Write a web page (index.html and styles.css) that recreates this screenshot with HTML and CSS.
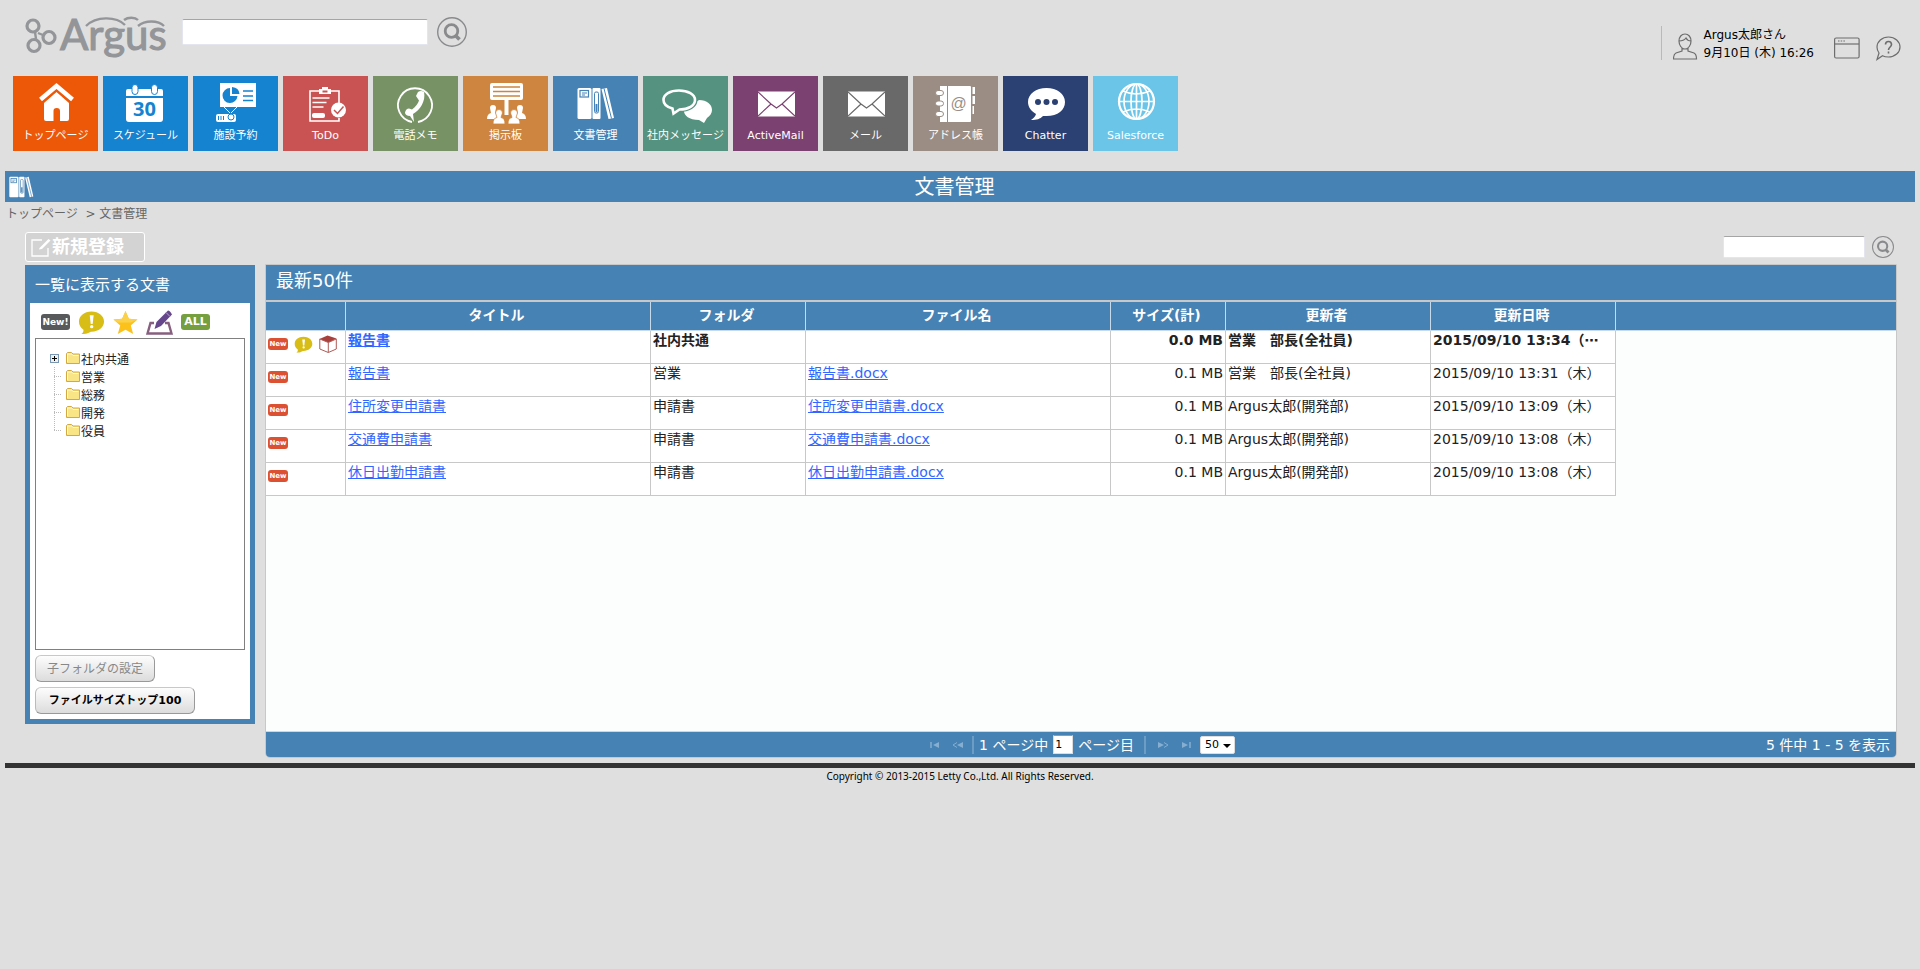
FILE: index.html
```html
<!DOCTYPE html>
<html lang="ja">
<head>
  <meta charset="utf-8">
  <title>文書管理</title>
  <link rel="stylesheet" href="styles.css">
</head>
<body>
  <!-- shared icons -->
  <svg class="defs" width="0" height="0">
    <symbol id="docs" viewBox="0 0 38 33">
      <rect x="0.5" y="1" width="14" height="31" rx="1.5" fill="#fff"/>
      <rect x="3" y="3.5" width="8.5" height="6.5" fill="none" stroke="#4682b4" stroke-width="1.2"/>
      <path d="M5 6h5M5 8h3" stroke="#4682b4"/>
      <rect x="15.5" y="1" width="8" height="31" rx="1" fill="#fff"/>
      <rect x="17.5" y="5" width="4" height="21" rx="1.5" fill="none" stroke="#4682b4"/>
      <path d="M19.500 17v8" stroke="#4682b4" stroke-width="2"/>
      <path d="M24.500 2l5.500-1 7 30-5.500 1z" fill="#fff"/>
      <path d="M27 1.500l7.500 30" stroke="#4682b4"/>
    </symbol>
    <symbol id="mail" viewBox="0 0 37 26">
      <rect x="0" y="0.500" width="37" height="25" fill="#fff"/>
      <path d="M0 1l13 12 5.500 4 5.500-4L37 1M0 25l13-12M37 25L24 13" fill="none" stroke="currentColor" stroke-width="1.200"/>
    </symbol>
    <symbol id="search" viewBox="0 0 30 30">
      <circle cx="15" cy="15" r="14.300" fill="none" stroke="#898a8c" stroke-width="1.400"/>
      <circle cx="14.500" cy="14" r="6.300" fill="none" stroke="#898a8c" stroke-width="2.800"/>
      <path d="M18.500 18.500l4 4" stroke="#898a8c" stroke-width="3.800"/>
    </symbol>
    <symbol id="notice" viewBox="0 0 28 25">
      <path d="M14 1c7.500 0 13 4.500 13 10.500S21.500 22 14 22c-2 0-3.300 2.500-10.500 2.500 2-1.500 2.500-3.500 2-4.700C2.500 18 1 15 1 11.500 1 5.500 6.500 1 14 1z" fill="#d8bd17"/>
      <path d="M12.200 5h4l-1 9h-2z" fill="#fff"/>
      <circle cx="14.200" cy="16.800" r="1.700" fill="#fff"/>
    </symbol>
    <symbol id="folder" viewBox="0 0 14 12">
      <path d="M0.500 11.500v-10l1-1h4l1.500 1.500h6.500v9.500z" fill="#f9e486" stroke="#d4a93f"/>
      <path d="M1.500 10V2h4l1.500 1.500h5.500" fill="none" stroke="#fffbd0"/>
    </symbol>
  </svg>

  <header class="header">
    <div class="header-left">
      <svg class="logo" viewBox="0 0 142 46" role="img" aria-label="Argus">
        <g fill="none" stroke="#939598" stroke-width="3.200">
          <circle cx="8" cy="10" r="6"/>
          <circle cx="24" cy="21.500" r="6"/>
          <circle cx="9" cy="29.500" r="6"/>
          <path d="M10 16l1 7M13 17l5 2" stroke-width="2.400"/>
          <path d="M61 10c10-10 30-10 39-1M99 4c4-3 11-3 14 0M113 10c7-6 20-6 26 0" stroke-width="2.400"/>
        </g>
        <text x="35" y="34" font-family="Lato" font-size="42" fill="#939598" stroke="#939598" stroke-width="1.100">Argus</text>
      </svg>
      <input class="text-box site-search" type="text" aria-label="検索">
      <button class="icon-btn" aria-label="検索"><svg width="30" height="30"><use href="#search"/></svg></button>
    </div>
    <div class="user">
      <svg class="user-icon" viewBox="0 0 25 27" fill="none" stroke="#6d6d6d" stroke-width="1.200">
        <path d="M6 8c0-4 2.500-7 6-7s6 3 6 7-2.500 8-6 8-6-4-6-8zM6 8c3 0 5.500-1 7-3 1 2 2.500 3 5 3M9 15v3l-6 2c-2 1-2.500 3-2.500 6h23c0-3-.5-5-2.500-6l-6-2v-3"/>
      </svg>
      <p>Argus太郎さん<br>9月10日 (木) 16:26</p>
      <svg class="window-icon" viewBox="0 0 26 22" fill="none" stroke="#6d6d6d" stroke-width="1.200">
        <rect x="0.600" y="1" width="24.500" height="20" rx="1.500"/>
        <path d="M1 7h24"/><path d="M4 4h7" stroke-dasharray="1.500 1.200"/>
      </svg>
      <svg class="help-icon" viewBox="0 0 26 25" fill="none" stroke="#6d6d6d" stroke-width="1.200">
        <path d="M13.500 1c6.500 0 11.500 4.500 11.500 10s-5 10-11.500 10c-2.200 0-4.500-.5-6-1.300L2 23.500l2-6.500c-1.300-1.700-2-3.700-2-6C2 5.500 7 1 13.500 1z"/>
        <path d="M10.500 8.500c0-4 6-4 6 0 0 2.500-3 2.500-3 5.500M13.500 15.500v2" stroke-width="1.600"/>
      </svg>
    </div>
  </header>

  <nav class="menu">
    <a href="#" class="tile home">
      <svg viewBox="0 0 85 50"><path d="M31 27L43.500 16 56 27v16q0 2-2 2h-7V35q0-3-3.300-3T40.500 35v10H33q-2 0-2-2z" fill="#fff"/><path d="M27.500 23.500L43.500 10l16 13.500" fill="none" stroke="#fff" stroke-width="4.500"/><path d="M30 26.500L43.500 15 57 26.500" fill="none" stroke="#ec5807" stroke-width="0.800"/></svg>
      <span>トップページ</span>
    </a>
    <a href="#" class="tile schedule">
      <svg viewBox="0 0 85 50"><path d="M23 20v-5q0-2 2-2h33q2 0 2 2v5zM23 22h37v21q0 3-3 3H26q-3 0-3-3z" fill="#fff"/><rect x="29" y="8.500" width="6" height="10" rx="3" fill="#fff" stroke="#1583d0"/><rect x="48.500" y="8.500" width="6" height="10" rx="3" fill="#fff" stroke="#1583d0"/><text x="41.500" y="40" text-anchor="middle" font-family="Open Sans" font-weight="bold" font-size="20" fill="#1583d0">30</text></svg>
      <span>スケジュール</span>
    </a>
    <a href="#" class="tile facility">
      <svg viewBox="0 0 85 50"><rect x="27" y="7" width="36" height="24" fill="#fff"/><path d="M37 12a7.500 7.500 0 1 0 7.500 8H37z" fill="#1583d0"/><path d="M39 11v7h7.500q-.5-6.500-7.500-7z" fill="#1583d0"/><path d="M50 15h10M50 20h10M50 24.500h10" stroke="#1583d0" stroke-width="1.600"/><path d="M31 31l6 6M44 31l-6 6" stroke="#fff"/><rect x="23" y="38" width="20" height="8" rx="2" fill="#fff"/><path d="M25.500 40v4M28 40v4M30.500 40v4" stroke="#1583d0"/><circle cx="38" cy="41" r="3" fill="#fff" stroke="#1583d0"/></svg>
      <span>施設予約</span>
    </a>
    <a href="#" class="tile todo">
      <svg viewBox="0 0 85 50"><path d="M36 15h-9v30h29v-3M56 27V15h-8" fill="none" stroke="#fff" stroke-width="1.600"/><path d="M36 18v-5h3v-2h6v2h3v5z" fill="#fff"/><path d="M39.500 15.500h5" stroke="#c95353" stroke-width="2"/><path d="M29.500 22h17M29.500 26.500h14M29.500 31h11" stroke="#fff" stroke-width="1.600"/><rect x="29" y="37" width="13" height="5" rx="2" fill="#fff"/><circle cx="55.500" cy="34" r="7.500" fill="#fff"/><path d="M51 34l3.500 3.500 6-7" fill="none" stroke="#c95353" stroke-width="1.500"/></svg>
      <span>ToDo</span>
    </a>
    <a href="#" class="tile phone">
      <svg viewBox="0 0 85 50"><path d="M39 46a17 17 0 1 1 6 0" fill="none" stroke="#fff" stroke-width="1.800"/><path d="M43 20l2-4q3-2 6 0c2 9-4 18-11 22l1 8-4-6c-3 0-5-1.500-5-3.500q1-4 4-4l3 1c4-3 6-6 7-9z" fill="#fff"/></svg>
      <span>電話メモ</span>
    </a>
    <a href="#" class="tile board">
      <svg viewBox="0 0 85 50"><rect x="27" y="7" width="33" height="17" rx="2" fill="#fff"/><path d="M30 11h27M30 15.500h27M30 20h27" stroke="#cd853f" stroke-width="1.300"/><path d="M43.500 24v15" stroke="#fff" stroke-width="4"/><g fill="#fff"><path d="M24 43q0-5 4-6l-1-5q0-3 3-3t3 3l-1 5q4 1 4 6zM63 43q0-5-4-6l1-5q0-3-3-3t-3 3l1 5q-4 1-4 6z"/><path d="M30 48q0-6 4-6.500l-1.500-4.500q0-3.500 3.500-3.500t3.500 3.500L38 41.500q4 .5 4 6.500zM57 48q0-6-4-6.500l1.500-4.500q0-3.500-3.500-3.500T47.500 37l1.500 4.500q-4 .5-4 6.500z" stroke="#cd853f" stroke-width="0.800"/></g></svg>
      <span>掲示板</span>
    </a>
    <a href="#" class="tile docs">
      <svg viewBox="0 0 85 50"><use href="#docs" x="24" y="11" width="38" height="33"/></svg>
      <span>文書管理</span>
    </a>
    <a href="#" class="tile message">
      <svg viewBox="0 0 85 50"><path d="M56 24c8 0 13 4.500 13 10 0 3-2 6-5 8l-3 5-5-3c-10 0-15-4.500-15-9z" fill="#fff"/><path d="M36 14.500c-9 0-15.500 4-15.500 9.500 0 4 3 7 8 8.500l2 6 6-5c9 0 15.500-4 15.500-9.500s-7-9.500-16-9.500z" fill="#55927f" stroke="#55927f" stroke-width="5"/><path d="M36 14.500c-9 0-15.500 4-15.500 9.500 0 4 3 7 9 8.500l1 5 6-4c9 0 15.500-4 15.500-9.500s-7-9.500-16-9.500z" fill="#55927f" stroke="#fff" stroke-width="2.600"/></svg>
      <span>社内メッセージ</span>
    </a>
    <a href="#" class="tile active-mail">
      <svg viewBox="0 0 85 50"><use href="#mail" x="25" y="15" width="37" height="26"/></svg>
      <span>ActiveMail</span>
    </a>
    <a href="#" class="tile mail">
      <svg viewBox="0 0 85 50"><use href="#mail" x="25" y="15" width="37" height="26"/></svg>
      <span>メール</span>
    </a>
    <a href="#" class="tile address">
      <svg viewBox="0 0 85 50"><path d="M27 10h30q1 0 1 1v34q0 1-1 1H27z" fill="#fff"/><path d="M34.500 10v36" stroke="#9c8d84"/><path d="M59.500 11h2.500v7h-2.500zM59.500 20h2.500v8h-2.500zM59.500 30h1.500v8h-1.500z" fill="#fff"/><g fill="#fff" stroke="#9c8d84"><rect x="22.500" y="14.500" width="8" height="5" rx="2.500"/><rect x="22.500" y="25" width="8" height="5" rx="2.500"/><rect x="22.500" y="35.500" width="8" height="5" rx="2.500"/></g><text x="45.500" y="33" text-anchor="middle" font-family="Liberation Sans" font-size="16" fill="#9c8d84">@</text></svg>
      <span>アドレス帳</span>
    </a>
    <a href="#" class="tile chatter">
      <svg viewBox="0 0 85 50"><path d="M43.500 12C54 12 62 18 62 26s-7 14-18.500 14H40c-3 3-6 4-12 4 3-2 4.500-4 5-6-5-3-8-7-8-12 0-8 8-14 18.500-14z" fill="#fff"/><g fill="#2b4073"><circle cx="35" cy="26" r="3"/><circle cx="43.500" cy="26" r="3"/><circle cx="52" cy="26" r="3"/></g></svg>
      <span>Chatter</span>
    </a>
    <a href="#" class="tile salesforce">
      <svg viewBox="0 0 85 50" fill="none" stroke="#fff" stroke-width="1.700"><circle cx="43.500" cy="25.500" r="17.500" stroke-width="2.200"/><ellipse cx="43.500" cy="25.500" rx="12.500" ry="17.500"/><ellipse cx="43.500" cy="25.500" rx="5.500" ry="17.500"/><path d="M43.500 8v35M26 25.500h35M30 15q13 6 27 0M30 36q13-6 27 0"/></svg>
      <span>Salesforce</span>
    </a>
  </nav>

  <div class="title-bar">
    <svg width="25" height="22"><use href="#docs"/></svg>
    <h1>文書管理</h1>
  </div>
  <div class="breadcrumb"><a href="#">トップページ</a> &nbsp;&gt; 文書管理</div>

  <div class="toolbar">
    <button class="new-btn">
      <svg viewBox="0 0 20 20" fill="none" stroke="#fff"><path d="M11 3H1v16h16v-8" stroke-width="1.300"/><path d="M8.500 11l9-9 2 1.500-8.500 8.500-3 .5z" fill="#fff" stroke="none"/></svg>新規登録
    </button>
    <div class="grid-search">
      <input class="text-box" type="text" aria-label="文書検索">
      <button class="icon-btn" aria-label="文書検索"><svg width="22" height="22"><use href="#search"/></svg></button>
    </div>
  </div>

  <main class="content">
    <aside class="side">
      <h2>一覧に表示する文書</h2>
      <div class="side-body">
        <div class="filters">
          <button class="badge badge-new">New!</button>
          <button class="icon-btn" aria-label="お知らせ"><svg width="27" height="25"><use href="#notice"/></svg></button>
          <button class="icon-btn" aria-label="お気に入り"><svg width="25" height="25" viewBox="0 0 26 25"><path d="M13 0.500l3.500 8 9 1-7 6 2.500 9-8-4.500-8 4.500 2.500-9-7-6 9-1z" fill="#fcc21b"/><path d="M0.500 9.500l9-1 3.500-8 3.500 8 9 1-7 3H5z" fill="#fbd14b"/></svg></button>
          <button class="icon-btn" aria-label="編集"><svg width="27" height="25" viewBox="0 0 27 25"><path d="M8 13H4.500L1.500 23.500h24L22.500 13H19" fill="none" stroke="#87607f" stroke-width="2.400"/><path d="M8.500 19l2-7L22 0.500q2 0 4 4L15 16z" fill="#67478c"/><path d="M20 2.500l4 4" stroke="#b6a3c9"/></svg></button>
          <button class="badge badge-all">ALL</button>
        </div>
        <ul class="tree">
          <li><span class="branch root"><span class="plus"></span></span><svg><use href="#folder"/></svg>社内共通</li>
          <li><span class="branch"></span><svg><use href="#folder"/></svg>営業</li>
          <li><span class="branch"></span><svg><use href="#folder"/></svg>総務</li>
          <li><span class="branch"></span><svg><use href="#folder"/></svg>開発</li>
          <li><span class="branch last"></span><svg><use href="#folder"/></svg>役員</li>
        </ul>
        <button class="gray-btn folder-btn" disabled>子フォルダの設定</button>
        <button class="gray-btn size-btn">ファイルサイズトップ100</button>
      </div>
    </aside>

    <section class="grid">
      <h2>最新50件</h2>
      <div class="grid-body">
        <table>
          <colgroup><col class="c-mark"><col class="c-wide"><col class="c-folder"><col class="c-wide"><col class="c-size"><col class="c-user"><col class="c-date"><col></colgroup>
          <thead>
            <tr><th></th><th>タイトル</th><th>フォルダ</th><th>ファイル名</th><th>サイズ(計)</th><th>更新者</th><th>更新日時</th><th class="rest"></th></tr>
          </thead>
          <tbody>
            <tr class="unread">
              <td><div class="marks"><span class="mark-new">New</span><svg width="19" height="17"><use href="#notice"/></svg><svg width="18" height="18" viewBox="0 0 18 18"><path d="M0.500 4l8-3.500 9 3-8 4z" fill="#a8403c"/><path d="M0.800 4v10l8.500 3.500 8-3.500V4L9.300 7.500zM9.300 7.500v10" fill="none" stroke="#b05a55"/></svg></div></td>
              <td><a href="#">報告書</a></td><td>社内共通</td><td></td><td class="num">0.0 MB</td><td>営業　部長(全社員)</td><td>2015/09/10 13:34（⋯</td><td class="rest"></td>
            </tr>
            <tr>
              <td><div class="marks"><span class="mark-new">New</span></div></td>
              <td><a href="#">報告書</a></td><td>営業</td><td><a href="#">報告書.docx</a></td><td class="num">0.1 MB</td><td>営業　部長(全社員)</td><td>2015/09/10 13:31（木）</td><td class="rest"></td>
            </tr>
            <tr>
              <td><div class="marks"><span class="mark-new">New</span></div></td>
              <td><a href="#">住所変更申請書</a></td><td>申請書</td><td><a href="#">住所変更申請書.docx</a></td><td class="num">0.1 MB</td><td>Argus太郎(開発部)</td><td>2015/09/10 13:09（木）</td><td class="rest"></td>
            </tr>
            <tr>
              <td><div class="marks"><span class="mark-new">New</span></div></td>
              <td><a href="#">交通費申請書</a></td><td>申請書</td><td><a href="#">交通費申請書.docx</a></td><td class="num">0.1 MB</td><td>Argus太郎(開発部)</td><td>2015/09/10 13:08（木）</td><td class="rest"></td>
            </tr>
            <tr>
              <td><div class="marks"><span class="mark-new">New</span></div></td>
              <td><a href="#">休日出勤申請書</a></td><td>申請書</td><td><a href="#">休日出勤申請書.docx</a></td><td class="num">0.1 MB</td><td>Argus太郎(開発部)</td><td>2015/09/10 13:08（木）</td><td class="rest"></td>
            </tr>
          </tbody>
        </table>
      </div>
      <div class="pager">
        <div class="pager-nav">
          <button class="icon-btn" disabled aria-label="最初"><svg width="10" height="6" viewBox="0 0 10 6"><path d="M1 0v6" stroke="#86aed0" stroke-width="1.500"/><path d="M9 0v6L3 3z" fill="#86aed0"/></svg></button>
          <button class="icon-btn" disabled aria-label="前"><svg width="11" height="6" viewBox="0 0 11 6"><path d="M5 0.500L1 3l4 2.500" fill="none" stroke="#86aed0"/><path d="M11 0v6L5 3z" fill="#86aed0"/></svg></button>
          <span class="sep"></span>
          <label for="page">1 ページ中</label>
          <input id="page" type="text" value="1">
          <span>ページ目</span>
          <span class="sep"></span>
          <button class="icon-btn" disabled aria-label="次"><svg width="11" height="6" viewBox="0 0 11 6"><path d="M0 0v6l6-3z" fill="#86aed0"/><path d="M6 0.500L10 3 6 5.500" fill="none" stroke="#86aed0"/></svg></button>
          <button class="icon-btn" disabled aria-label="最後"><svg width="10" height="6" viewBox="0 0 10 6"><path d="M1 0v6l6-3z" fill="#86aed0"/><path d="M9 0v6" stroke="#86aed0" stroke-width="1.500"/></svg></button>
          <span class="rows"><select aria-label="表示件数"><option>50</option><option>100</option></select></span>
        </div>
        <div class="pager-info">5 件中 1 - 5 を表示</div>
      </div>
    </section>
  </main>

  <footer class="footer">Copyright © 2013-2015 Letty Co.,Ltd. All Rights Reserved.</footer>
</body>
</html>
```

FILE: styles.css
```css
* {
  box-sizing: border-box;
}

body {
  margin: 0;
  padding: 0 5px;
  background: #dfdfdf;
  color: #222;
  font-family: "DejaVu Sans", "Noto Sans CJK JP", sans-serif;
  font-size: 14px;
}

svg {
  display: block;
  flex: none;
}

h1, h2, p, ul {
  margin: 0;
  padding: 0;
  font-weight: normal;
}

button, input, select {
  font-family: inherit;
  margin: 0;
}

.defs {
  position: absolute;
}

.icon-btn {
  padding: 0;
  border: 0;
  background: none;
  cursor: pointer;
}

.text-box {
  height: 22px;
  border: 1px solid #e3e6ee;
  border-top-color: #a5a5a5;
  border-radius: 2px;
  background: #fff;
}

/* header */
.header {
  display: flex;
  justify-content: space-between;
  padding: 16px 14px 0 20px;
  height: 76px;
}

.header-left {
  display: flex;
  align-items: flex-start;
}

.logo {
  width: 142px;
  height: 46px;
  overflow: visible;
}

.site-search {
  width: 246px;
  height: 26px;
  margin: 3px 9px 0 15px;
}

.header-left .icon-btn {
  margin-top: 1px;
}

.user {
  display: flex;
  align-items: center;
  height: 34px;
  margin-top: 10px;
  padding-left: 11px;
  border-left: 1px solid #b9b9b9;
  color: #000;
  font-size: 12px;
  line-height: 18px;
}

.user p {
  margin-top: 2px;
}

.user-icon {
  width: 25px;
  height: 27px;
  margin: 6px 6px 0 0;
}

.window-icon {
  width: 26px;
  height: 22px;
  margin: 10px 15px 0 20px;
}

.help-icon {
  width: 26px;
  height: 25px;
  margin-top: 10px;
}

/* menu tiles */
.menu {
  display: flex;
  flex-wrap: wrap;
  gap: 5px;
  padding: 0 8px;
  margin-bottom: 20px;
}

.tile {
  width: 85px;
  height: 75px;
  color: #fff;
  font-size: 11px;
  line-height: 20px;
  text-align: center;
  text-decoration: none;
  white-space: nowrap;
}

.tile svg {
  width: 85px;
  height: 50px;
}

.home { background: #ec5807; }
.schedule, .facility { background: #1583d0; }
.todo { background: #c95353; }
.phone { background: #779365; }
.board { background: #cd853f; }
.docs { background: #4682b4; }
.message { background: #55927f; }
.active-mail { background: #7b4171; }
.mail { background: #696969; }
.address { background: #9c8d84; }
.chatter { background: #2b4073; }
.salesforce { background: #6bc5e8; }

.active-mail svg { color: #7b4171; }
.mail svg { color: #696969; }

/* title */
.title-bar {
  display: flex;
  align-items: center;
  height: 31px;
  padding: 0 40px 0 4px;
  background: #4682b4;
  color: #fff;
}

.title-bar h1 {
  flex: 1;
  font-size: 20px;
  line-height: 30px;
  text-align: center;
}

.breadcrumb {
  padding-left: 1px;
  color: #666;
  font-size: 12px;
  line-height: 24px;
}

.breadcrumb a {
  color: #666;
  text-decoration: none;
}

.toolbar {
  display: flex;
  justify-content: space-between;
  align-items: center;
  padding: 6px 21px 2px 20px;
}

.new-btn {
  display: flex;
  align-items: center;
  gap: 1px;
  width: 120px;
  height: 30px;
  padding: 0 5px;
  border: 1px solid #fff;
  border-radius: 3px;
  background: #d3d3d3;
  color: #fff;
  font-size: 18px;
  font-weight: bold;
  line-height: 26px;
}

.new-btn svg {
  width: 20px;
  height: 20px;
}

.grid-search {
  display: flex;
  align-items: center;
  gap: 7px;
}

.grid-search .text-box {
  width: 142px;
}

/* content */
.content {
  display: flex;
  align-items: flex-start;
  gap: 10px;
  padding: 0 18px 5px 20px;
}

.side {
  width: 230px;
  margin-top: 1px;
  border: 5px solid #4682b4;
  border-top: 0;
  background: #fff;
}

.side h2 {
  height: 38px;
  padding-left: 5px;
  background: #4682b4;
  color: #fff;
  font-size: 15px;
  line-height: 40px;
}

.side-body {
  display: flex;
  flex-direction: column;
  align-items: flex-start;
  gap: 5px;
  padding: 8px 5px 5px;
}

.filters {
  display: flex;
  align-items: center;
  gap: 8px;
  height: 22px;
  padding-left: 6px;
}

.badge {
  width: 29px;
  height: 16px;
  padding: 0;
  border: 0;
  border-radius: 3px;
  color: #fff;
  font-size: 9px;
  font-weight: bold;
  line-height: 16px;
}

.badge-new {
  background: #58595b;
}

.badge-all {
  background: #769f40;
  font-size: 11px;
}

.tree {
  align-self: stretch;
  height: 312px;
  padding: 10px 14px;
  border: 1px solid #808080;
  list-style: none;
  font-size: 12px;
}

.tree li {
  display: flex;
  align-items: center;
  height: 18px;
}

.tree svg {
  width: 14px;
  height: 12px;
  margin-right: 1px;
}

.branch {
  display: flex;
  align-items: center;
  width: 16px;
  height: 18px;
  background:
    linear-gradient(90deg, #bbb 50%, transparent 50%) 4px 9px / 2px 1px repeat-x,
    linear-gradient(#bbb 50%, transparent 50%) 4px 0 / 1px 2px repeat-y;
  clip-path: polygon(4px 0, 5px 0, 5px 9px, 12px 9px, 12px 10px, 5px 10px, 5px 18px, 4px 18px);
}

.branch.last {
  clip-path: polygon(4px 0, 5px 0, 5px 9px, 12px 9px, 12px 10px, 4px 10px);
}

.branch.root {
  clip-path: none;
  background: none;
}

.plus {
  width: 9px;
  height: 9px;
  border: 1px solid #7898b5;
  background:
    linear-gradient(#000, #000) center / 5px 1px no-repeat,
    linear-gradient(#000, #000) center / 1px 5px no-repeat,
    #f1f0ea;
}

.gray-btn {
  height: 27px;
  padding: 0;
  border: 1px solid #999;
  border-top-color: #c8c8c8;
  border-left-color: #bbb;
  border-radius: 6px;
  background: linear-gradient(#fdfdfd, #dcdcdc);
  line-height: 24px;
}

.folder-btn {
  width: 120px;
  color: #888;
  font-size: 12px;
}

.size-btn {
  width: 160px;
  color: #000;
  font-size: 11px;
  font-weight: bold;
}

/* document list */
.grid {
  flex: 1;
  min-width: 0;
  border: 1px solid #c8c8c8;
  border-radius: 0 0 5px 5px;
  overflow: hidden;
}

.grid h2 {
  height: 37px;
  padding-left: 10px;
  border-bottom: 2px solid #c8c8c8;
  background: #4682b4;
  color: #fff;
  font-size: 18px;
  line-height: 32px;
}

.grid-body {
  min-height: 429px;
  background: #fcfefe;
}

table {
  width: 100%;
  table-layout: fixed;
  border-spacing: 0;
}

.c-mark { width: 80px; }
.c-wide { width: 305px; }
.c-folder { width: 155px; }
.c-size { width: 115px; }
.c-user { width: 205px; }
.c-date { width: 185px; }

th {
  height: 29px;
  padding: 0 3px 2px 0;
  border-right: 1px solid #c5dbec;
  border-bottom: 1px solid #c5dbec;
  background: #4682b4;
  color: #fff;
  line-height: 24px;
}

th.rest {
  border-right: 0;
}

td {
  height: 33px;
  padding: 0 2px;
  border-right: 1px solid #c8c8c8;
  border-bottom: 1px solid #c8c8c8;
  background: #fff;
  line-height: 19px;
  vertical-align: top;
  white-space: nowrap;
  overflow: hidden;
}

td.rest {
  border: 0;
  background: none;
}

td a {
  color: #36f;
}

.unread td {
  font-weight: bold;
}

.num {
  text-align: right;
}

.marks {
  display: flex;
  align-items: center;
  gap: 6px;
  height: 26px;
}

.mark-new {
  width: 20px;
  height: 12px;
  border-radius: 3px;
  background: #dc5132;
  color: #fff;
  font-size: 7px;
  font-weight: bold;
  line-height: 12px;
  text-align: center;
}

/* pager */
.pager {
  display: grid;
  grid-template-columns: 1fr auto 1fr;
  align-items: center;
  height: 26px;
  border-top: 1px solid #c5dbec;
  background: #4682b4;
  color: #fff;
  line-height: 24px;
}

.pager-nav {
  grid-column: 2;
  display: flex;
  align-items: center;
  gap: 5px;
}

.pager-nav .icon-btn {
  margin: 0 4px 0 3px;
}

.sep {
  width: 2px;
  height: 18px;
  background: #6d9dc4;
}

span + .sep {
  margin: 0 4px 0 5px;
}

.pager-nav input {
  width: 20px;
  height: 19px;
  padding: 0 1px;
  border: 1px solid #ddd;
  border-top-color: #999;
  background: #fff;
  font-size: 11px;
}

.rows {
  position: relative;
}

.rows select {
  display: block;
  width: 35px;
  height: 18px;
  padding: 0 4px;
  border: 1px solid #ddd;
  border-radius: 2px;
  appearance: none;
  background: #fff;
  color: #000;
  font-size: 11px;
}

.rows::after {
  content: "";
  position: absolute;
  right: 4px;
  top: 8px;
  border: 4px solid transparent;
  border-top-color: #000;
  border-bottom: 0;
  pointer-events: none;
}

.pager-info {
  padding-right: 6px;
  text-align: right;
}

.footer {
  border-top: 5px solid #333;
  color: #000;
  font-family: "Noto Sans", sans-serif;
  font-size: 10px;
  line-height: 17px;
  text-align: center;
}
```
